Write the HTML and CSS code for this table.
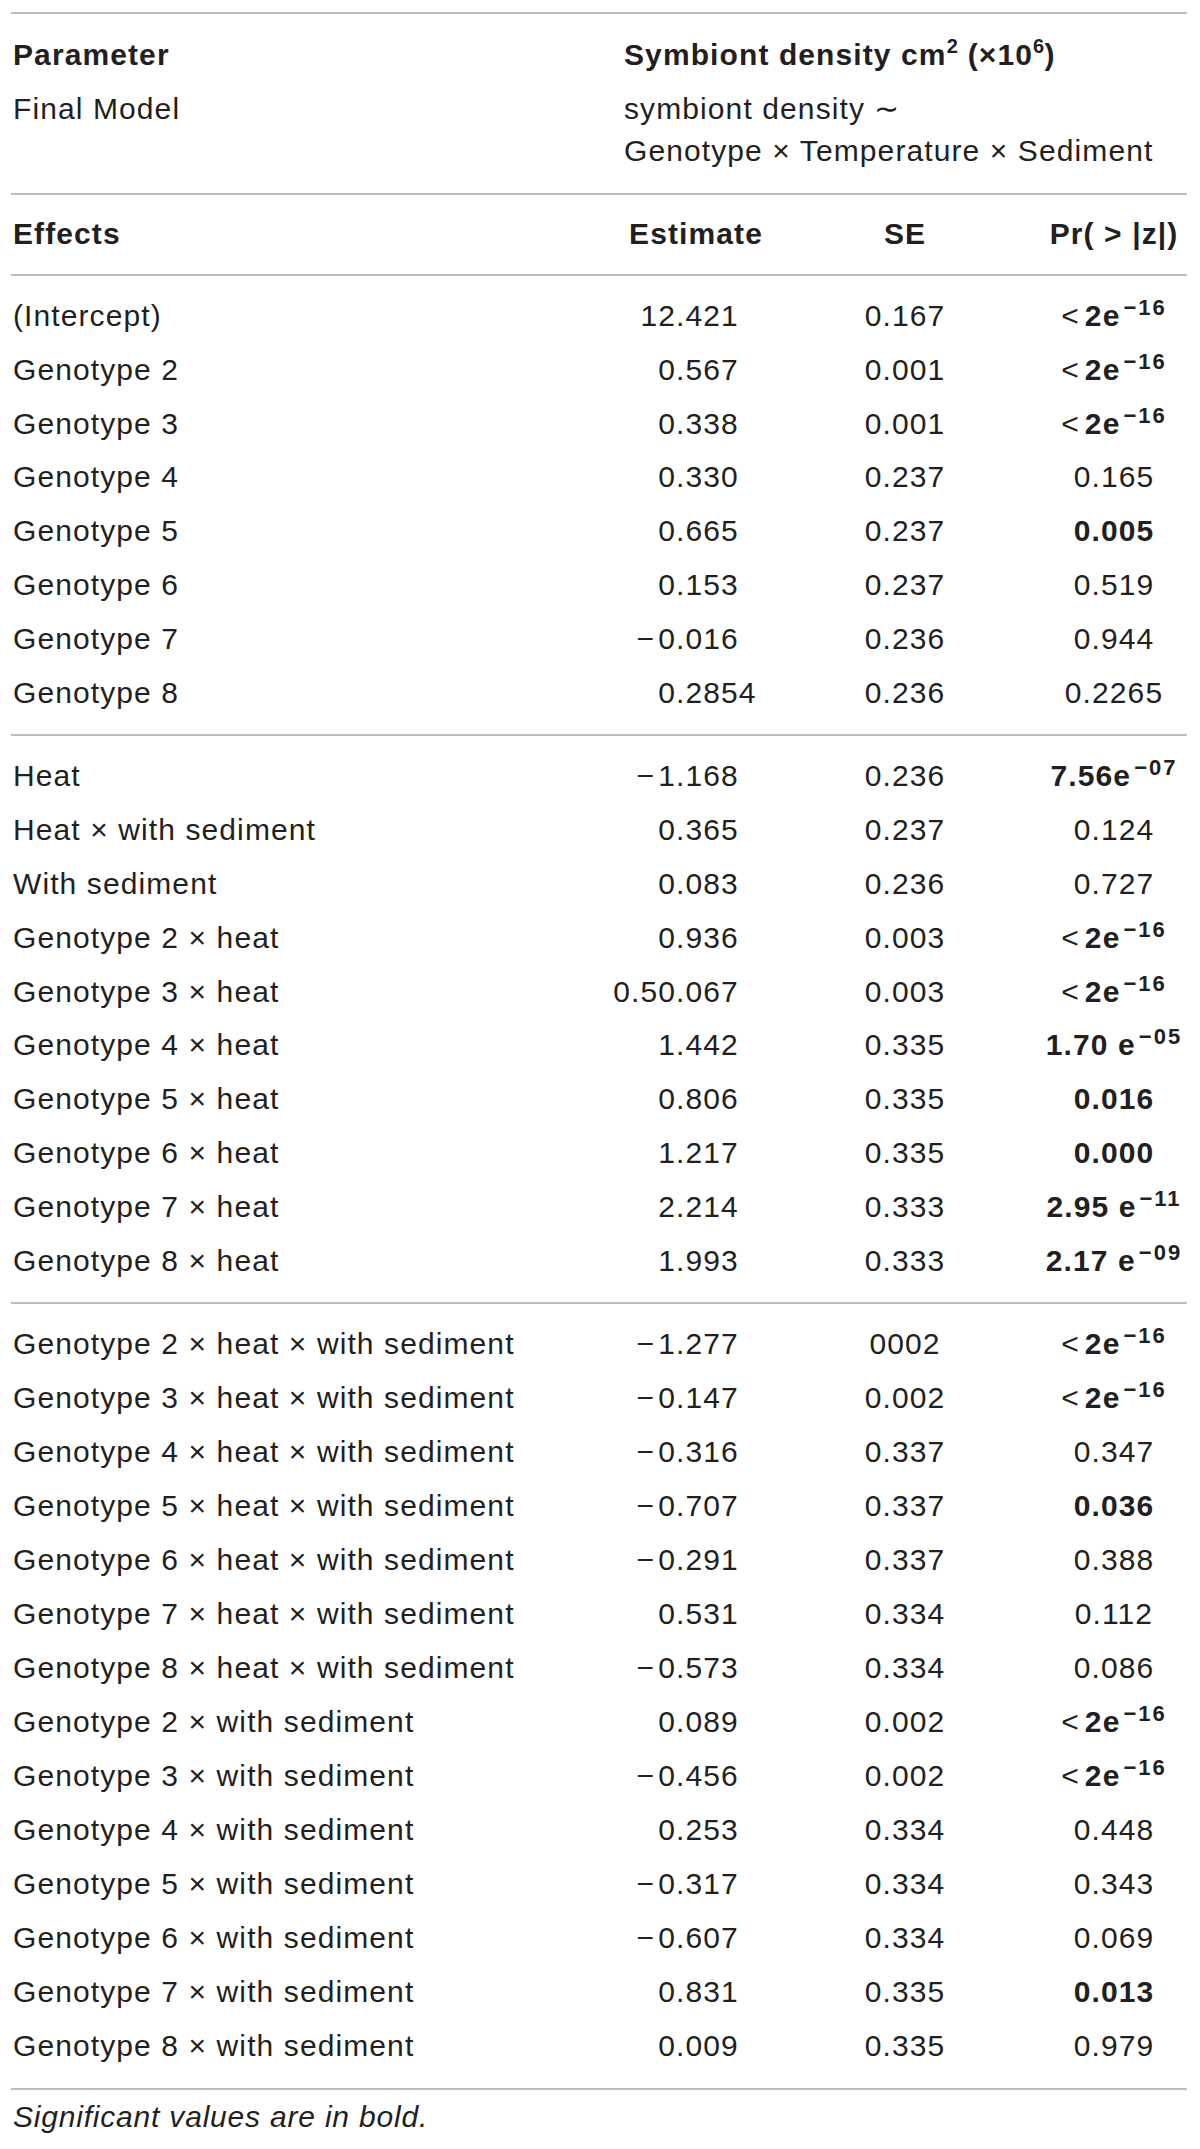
FILE: index.html
```html
<!DOCTYPE html>
<html lang="en">

<head>
    <meta charset="UTF-8">
    <meta name="viewport" content="width=device-width, initial-scale=1.0">
    <title>Symbiont density model</title>
    <link rel="stylesheet" href="styles.css">
</head>

<body>
    <div class="table_wrap">

        <!-- parameter / model -->
        <div class="section head_section">
            <div class="row">
                <div class="cell label bold">Parameter</div>
                <div class="cell span3 bold">Symbiont density cm<span class="sup_head">2</span> (×10<span class="sup_head">6</span>)</div>
            </div>
            <div class="row model_row">
                <div class="cell label">Final Model</div>
                <div class="cell span3">symbiont density ∼<br>Genotype × Temperature × Sediment</div>
            </div>
        </div>

        <!-- column titles -->
        <div class="section effects_head">
            <div class="row">
                <div class="cell label bold">Effects</div>
                <div class="cell center bold">Estimate</div>
                <div class="cell center bold">SE</div>
                <div class="cell center bold">Pr( &gt; |z|)</div>
            </div>
        </div>

        <!-- genotype main effects -->
        <div class="section body_section">
            <div class="row">
                <div class="cell label">(Intercept)</div>
                <div class="cell est"><span class="int">12</span>.421</div>
                <div class="cell center">0.167</div>
                <div class="cell center"><span class="lt">&lt;</span><b>2e<span class="sup">−16</span></b></div>
            </div>
            <div class="row">
                <div class="cell label">Genotype 2</div>
                <div class="cell est"><span class="int">0</span>.567</div>
                <div class="cell center">0.001</div>
                <div class="cell center"><span class="lt">&lt;</span><b>2e<span class="sup">−16</span></b></div>
            </div>
            <div class="row">
                <div class="cell label">Genotype 3</div>
                <div class="cell est"><span class="int">0</span>.338</div>
                <div class="cell center">0.001</div>
                <div class="cell center"><span class="lt">&lt;</span><b>2e<span class="sup">−16</span></b></div>
            </div>
            <div class="row">
                <div class="cell label">Genotype 4</div>
                <div class="cell est"><span class="int">0</span>.330</div>
                <div class="cell center">0.237</div>
                <div class="cell center">0.165</div>
            </div>
            <div class="row">
                <div class="cell label">Genotype 5</div>
                <div class="cell est"><span class="int">0</span>.665</div>
                <div class="cell center">0.237</div>
                <div class="cell center bold">0.005</div>
            </div>
            <div class="row">
                <div class="cell label">Genotype 6</div>
                <div class="cell est"><span class="int">0</span>.153</div>
                <div class="cell center">0.237</div>
                <div class="cell center">0.519</div>
            </div>
            <div class="row">
                <div class="cell label">Genotype 7</div>
                <div class="cell est"><span class="int"><span class="neg">−</span>0</span>.016</div>
                <div class="cell center">0.236</div>
                <div class="cell center">0.944</div>
            </div>
            <div class="row">
                <div class="cell label">Genotype 8</div>
                <div class="cell est"><span class="int">0</span>.2854</div>
                <div class="cell center">0.236</div>
                <div class="cell center">0.2265</div>
            </div>
        </div>

        <!-- heat / sediment -->
        <div class="section body_section">
            <div class="row">
                <div class="cell label">Heat</div>
                <div class="cell est"><span class="int"><span class="neg">−</span>1</span>.168</div>
                <div class="cell center">0.236</div>
                <div class="cell center bold">7.56e<span class="sup">−07</span></div>
            </div>
            <div class="row">
                <div class="cell label">Heat × with sediment</div>
                <div class="cell est"><span class="int">0</span>.365</div>
                <div class="cell center">0.237</div>
                <div class="cell center">0.124</div>
            </div>
            <div class="row">
                <div class="cell label">With sediment</div>
                <div class="cell est"><span class="int">0</span>.083</div>
                <div class="cell center">0.236</div>
                <div class="cell center">0.727</div>
            </div>
            <div class="row">
                <div class="cell label">Genotype 2 × heat</div>
                <div class="cell est"><span class="int">0</span>.936</div>
                <div class="cell center">0.003</div>
                <div class="cell center"><span class="lt">&lt;</span><b>2e<span class="sup">−16</span></b></div>
            </div>
            <div class="row">
                <div class="cell label">Genotype 3 × heat</div>
                <div class="cell est"><span class="int">0.50</span>.067</div>
                <div class="cell center">0.003</div>
                <div class="cell center"><span class="lt">&lt;</span><b>2e<span class="sup">−16</span></b></div>
            </div>
            <div class="row">
                <div class="cell label">Genotype 4 × heat</div>
                <div class="cell est"><span class="int">1</span>.442</div>
                <div class="cell center">0.335</div>
                <div class="cell center bold">1.70 e<span class="sup">−05</span></div>
            </div>
            <div class="row">
                <div class="cell label">Genotype 5 × heat</div>
                <div class="cell est"><span class="int">0</span>.806</div>
                <div class="cell center">0.335</div>
                <div class="cell center bold">0.016</div>
            </div>
            <div class="row">
                <div class="cell label">Genotype 6 × heat</div>
                <div class="cell est"><span class="int">1</span>.217</div>
                <div class="cell center">0.335</div>
                <div class="cell center bold">0.000</div>
            </div>
            <div class="row">
                <div class="cell label">Genotype 7 × heat</div>
                <div class="cell est"><span class="int">2</span>.214</div>
                <div class="cell center">0.333</div>
                <div class="cell center bold">2.95 e<span class="sup">−11</span></div>
            </div>
            <div class="row">
                <div class="cell label">Genotype 8 × heat</div>
                <div class="cell est"><span class="int">1</span>.993</div>
                <div class="cell center">0.333</div>
                <div class="cell center bold">2.17 e<span class="sup">−09</span></div>
            </div>
        </div>

        <!-- three way + genotype x sediment -->
        <div class="section body_section last_section">
            <div class="row">
                <div class="cell label">Genotype 2 × heat × with sediment</div>
                <div class="cell est"><span class="int"><span class="neg">−</span>1</span>.277</div>
                <div class="cell center">0002</div>
                <div class="cell center"><span class="lt">&lt;</span><b>2e<span class="sup">−16</span></b></div>
            </div>
            <div class="row">
                <div class="cell label">Genotype 3 × heat × with sediment</div>
                <div class="cell est"><span class="int"><span class="neg">−</span>0</span>.147</div>
                <div class="cell center">0.002</div>
                <div class="cell center"><span class="lt">&lt;</span><b>2e<span class="sup">−16</span></b></div>
            </div>
            <div class="row">
                <div class="cell label">Genotype 4 × heat × with sediment</div>
                <div class="cell est"><span class="int"><span class="neg">−</span>0</span>.316</div>
                <div class="cell center">0.337</div>
                <div class="cell center">0.347</div>
            </div>
            <div class="row">
                <div class="cell label">Genotype 5 × heat × with sediment</div>
                <div class="cell est"><span class="int"><span class="neg">−</span>0</span>.707</div>
                <div class="cell center">0.337</div>
                <div class="cell center bold">0.036</div>
            </div>
            <div class="row">
                <div class="cell label">Genotype 6 × heat × with sediment</div>
                <div class="cell est"><span class="int"><span class="neg">−</span>0</span>.291</div>
                <div class="cell center">0.337</div>
                <div class="cell center">0.388</div>
            </div>
            <div class="row">
                <div class="cell label">Genotype 7 × heat × with sediment</div>
                <div class="cell est"><span class="int">0</span>.531</div>
                <div class="cell center">0.334</div>
                <div class="cell center">0.112</div>
            </div>
            <div class="row">
                <div class="cell label">Genotype 8 × heat × with sediment</div>
                <div class="cell est"><span class="int"><span class="neg">−</span>0</span>.573</div>
                <div class="cell center">0.334</div>
                <div class="cell center">0.086</div>
            </div>
            <div class="row">
                <div class="cell label">Genotype 2 × with sediment</div>
                <div class="cell est"><span class="int">0</span>.089</div>
                <div class="cell center">0.002</div>
                <div class="cell center"><span class="lt">&lt;</span><b>2e<span class="sup">−16</span></b></div>
            </div>
            <div class="row">
                <div class="cell label">Genotype 3 × with sediment</div>
                <div class="cell est"><span class="int"><span class="neg">−</span>0</span>.456</div>
                <div class="cell center">0.002</div>
                <div class="cell center"><span class="lt">&lt;</span><b>2e<span class="sup">−16</span></b></div>
            </div>
            <div class="row">
                <div class="cell label">Genotype 4 × with sediment</div>
                <div class="cell est"><span class="int">0</span>.253</div>
                <div class="cell center">0.334</div>
                <div class="cell center">0.448</div>
            </div>
            <div class="row">
                <div class="cell label">Genotype 5 × with sediment</div>
                <div class="cell est"><span class="int"><span class="neg">−</span>0</span>.317</div>
                <div class="cell center">0.334</div>
                <div class="cell center">0.343</div>
            </div>
            <div class="row">
                <div class="cell label">Genotype 6 × with sediment</div>
                <div class="cell est"><span class="int"><span class="neg">−</span>0</span>.607</div>
                <div class="cell center">0.334</div>
                <div class="cell center">0.069</div>
            </div>
            <div class="row">
                <div class="cell label">Genotype 7 × with sediment</div>
                <div class="cell est"><span class="int">0</span>.831</div>
                <div class="cell center">0.335</div>
                <div class="cell center bold">0.013</div>
            </div>
            <div class="row">
                <div class="cell label">Genotype 8 × with sediment</div>
                <div class="cell est"><span class="int">0</span>.009</div>
                <div class="cell center">0.335</div>
                <div class="cell center">0.979</div>
            </div>
        </div>

        <div class="section note">Significant values are in bold.</div>
    </div>
</body>

</html>
```

FILE: styles.css
```css
body {
    margin: 0;
    background-color: #ffffff;
    color: #231f20;
    font-family: "Liberation Sans", Arial, sans-serif;
    font-size: 30px;
    letter-spacing: 1.1px;
}

.table_wrap {
    width: 1176px;
    margin-left: 11px;
    padding-top: 12px;
}

.section {
    border-top: 2px solid #bdbdbd;
}

/* rows = 4 columns */
.row {
    display: grid;
    grid-template-columns: 612px 146px 272px 146px;
    line-height: 54px;
    white-space: nowrap;
}

.cell.label {
    padding-left: 2px;
}

.span3 {
    grid-column: 2 / 5;
    padding-left: 1px;
}

.center {
    text-align: center;
}

.bold,
b {
    font-weight: bold;
}

/* 숫자 소수점 맞추기 (넘치면 왼쪽으로) */
.est {
    text-align: left;
}

.int {
    display: inline-flex;
    justify-content: flex-end;
    width: 53px;
}

.neg {
    margin-right: 3px;
}

.lt {
    font-weight: normal;
    margin-right: 5px;
}

.sup {
    font-size: 22px;
    line-height: 0;
    vertical-align: 11px;
    letter-spacing: 2px;
    margin-left: 3px;
}

.sup_head {
    font-size: 20px;
    line-height: 0;
    vertical-align: 12px;
    letter-spacing: 0.5px;
}

/* 위쪽 머리말 */
.head_section {
    padding-top: 14px;
    padding-bottom: 21px;
}

.model_row {
    margin-top: 6px;
    line-height: 42px;
}

.effects_head {
    padding-top: 12px;
    padding-bottom: 13px;
}

.body_section {
    padding-top: 13px;
    padding-bottom: 15px;
}

.body_section .row {
    line-height: 53.8px;
}

.last_section .row {
    line-height: 54px;
}

.note {
    font-style: italic;
    line-height: 54px;
    padding-left: 2px;
    letter-spacing: 0.8px;
}
```
